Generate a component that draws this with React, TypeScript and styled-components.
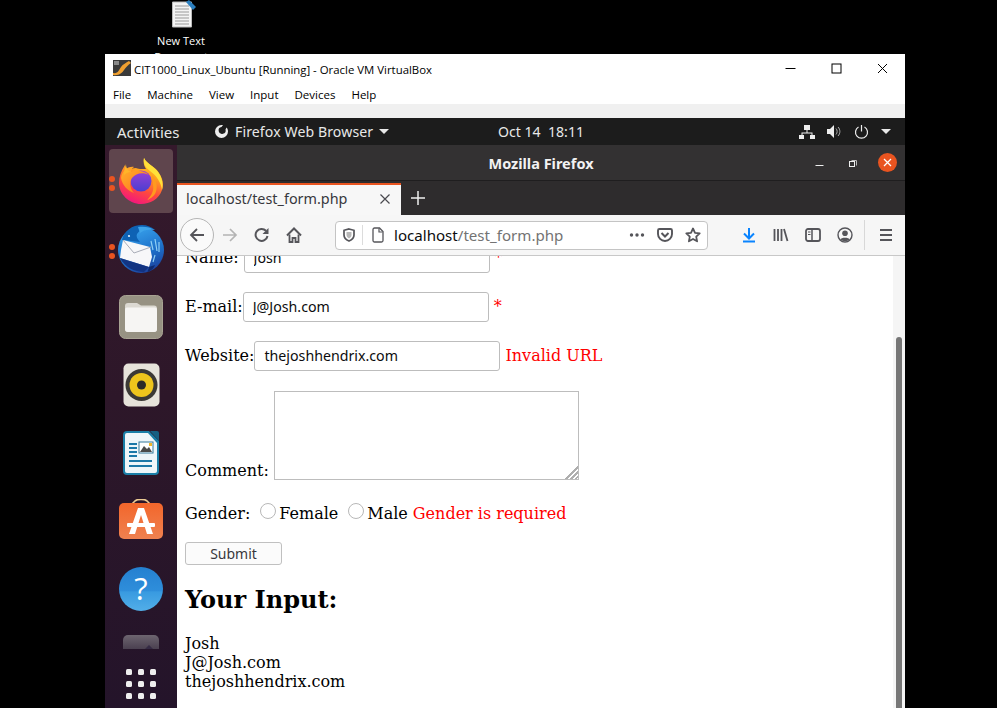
import React from "react";
import styled, { createGlobalStyle } from "styled-components";

const ui = `"Noto Sans", "Open Sans", sans-serif`;
const serif = `"DejaVu Serif", serif`;

const Global = createGlobalStyle`
  html, body { margin: 0; padding: 0; background: #000; overflow: hidden; }
  * { box-sizing: border-box; }
`;

const Screen = styled.div`
  width: 997px; height: 708px; background: #000; overflow: hidden;
  display: flex; flex-direction: column;
`;
const DesktopStrip = styled.div`
  height: 54px; flex: none; overflow: hidden; padding-left: 146px;
`;
const DesktopItem = styled.div`
  width: 70px; display: flex; flex-direction: column; align-items: center;
  color: #fff; font: 11px/16px "Open Sans", sans-serif; text-align: center;
`;
const DesktopIconBox = styled.span` margin-left: 5px; margin-bottom: 5px; `;
const VBox = styled.div`
  margin-left: 105px; width: 800px; flex: 1; min-height: 0; background: #fff;
  display: flex; flex-direction: column;
`;
const VTitle = styled.div`
  height: 28px; flex: none; display: flex; align-items: center; padding-left: 8px;
  font: 11.4px "Open Sans", sans-serif; color: #000;
`;
const VTitleText = styled.span` margin-left: 3px; flex: 1; padding-top: 2px; `;
const WinBtn = styled.span`
  width: 46px; height: 28px; display: flex; align-items: center; justify-content: center;
`;
const VMenu = styled.div`
  height: 22px; flex: none; display: flex; align-items: center; padding: 3px 0 0 8px; gap: 16px;
  font: 11.5px "Open Sans", sans-serif; color: #000;
`;
const VStrip = styled.div` height: 14px; flex: none; background: #f0f0f0; `;
const TopBar = styled.div`
  height: 27px; flex: none; background: #1c1c1c; color: #e8e8e8; display: flex; align-items: center;
  font: 14.1px ${ui}; white-space: nowrap;
`;
const Activities = styled.span` margin-left: 12px; width: 97px; font-size: 15px; `;
const AppMenu = styled.span` display: flex; align-items: center; gap: 6px; width: 175px; letter-spacing: 0.1px; `;
const Clock = styled.span` width: 107px; margin-left: 109px; `;
const Tray = styled.span`
  margin-left: auto; display: flex; align-items: center; gap: 12px; padding-right: 14px;
`;
const Desk = styled.div` flex: 1; min-height: 0; display: flex; `;
const Dock = styled.div`
  width: 72px; flex: none; background: linear-gradient(180deg, #35192c, #2d1729 45%, #24142a);
  display: flex; flex-direction: column; align-items: center; padding-top: 4px; gap: 4px; overflow: hidden;
`;
const DockSlot = styled.div<{ $active?: boolean }>`
  width: 64px; height: 64px; flex: none; border-radius: 4px; position: relative;
  display: flex; align-items: center; justify-content: center;
  background: ${p => (p.$active ? "#5f454d" : "transparent")};
`;
const Pips = styled.span`
  position: absolute; left: 0; top: 27px; display: flex; flex-direction: column; gap: 3px;
`;
const Pip = styled.span` width: 6px; height: 6px; border-radius: 50%; background: #e95420; `;
const PartialIcon = styled.div`
  width: 36px; height: 14px; flex: none; margin-top: 10px; border-radius: 5px 5px 0 0; position: relative;
  background: linear-gradient(180deg, #6d6570, #4a4050);
  &::after {
    content: ""; position: absolute; right: 6px; bottom: 0;
    border: 4px solid transparent; border-top: 0; border-bottom-color: #352a44;
  }
`;
const AppGrid = styled.div`
  margin-top: auto; margin-bottom: 9px; display: grid; grid-template-columns: repeat(3, 6px); gap: 6px;
`;
const GridDot = styled.span` width: 6px; height: 6px; border-radius: 1.5px; background: #eeeeee; `;
const Browser = styled.div` flex: 1; min-width: 0; display: flex; flex-direction: column; `;
const FfTitle = styled.div`
  height: 36px; flex: none; background: #333132; border-bottom: 1px solid #1f1e1f; color: #f2f2f2;
  display: grid; grid-template-columns: 1fr auto 1fr; align-items: center; font: 700 14.5px ${ui};
`;
const FfTitleText = styled.span` grid-column: 2; padding-top: 1px; `;
const FfControls = styled.div`
  grid-column: 3; display: flex; justify-content: flex-end; align-items: center; padding-right: 1px;
`;
const FfBtn = styled.span`
  width: 34px; height: 20px; display: flex; align-items: center; justify-content: center;
`;
const TabBar = styled.div`
  height: 34px; flex: none; background: #2e2c2d; display: flex;
`;
const Tab = styled.div`
  width: 224px; margin-top: 2px; background: #f7f7f7; border-top: 2px solid #e95420; color: #38383d;
  display: flex; align-items: center; padding: 0 11px 3px 9px; justify-content: space-between;
  font: 14.4px ${ui};
`;
const NewTab = styled.span`
  width: 34px; display: flex; align-items: center; justify-content: center;
`;
const Toolbar = styled.div`
  height: 41px; flex: none; background: #f6f6f6; border-bottom: 1px solid #c8c8c8;
  display: flex; align-items: center; padding-left: 3px;
`;
const BackBtn = styled.span`
  width: 34px; height: 34px; border-radius: 50%; border: 1px solid #b5b5b5; background: #fafafa; flex: none;
  display: flex; align-items: center; justify-content: center;
`;
const ToolBtn = styled.span`
  width: 32px; height: 32px; flex: none; display: flex; align-items: center; justify-content: center;
`;
const UrlBtn = styled.span`
  width: 28px; height: 28px; flex: none; display: flex; align-items: center; justify-content: center;
`;
const UrlBox = styled.div`
  width: 373px; height: 29px; flex: none; margin: 0 25px 0 25px; background: #fff; border: 1px solid #c4c4c4;
  border-radius: 4px; display: flex; align-items: center; padding: 0 0 0 5px; font: 15.1px ${ui}; color: #0c0c0d;
`;
const UrlDivider = styled.span` width: 1px; height: 20px; background: #dcdcdc; margin: 0 7px 0 5px; `;
const UrlText = styled.span` flex: 1; margin-left: 8px; `;
const UrlDim = styled.span` color: #737373; `;
const ToolSep = styled.span` width: 1px; height: 30px; background: #d8d8d8; margin: 0 5px 0 3px; flex: none; `;
const Viewport = styled.div` flex: 1; min-height: 0; display: flex; overflow: hidden; background: #fff; `;
const Page = styled.div`
  flex: 1; min-width: 0; padding-left: 8px; font: 16px ${serif}; color: #000;
`;
const ScrolledForm = styled.form` margin-top: -13px; `;
const Row = styled.div<{ $gap?: number }>`
  display: flex; align-items: center; margin-bottom: ${p => p.$gap ?? 19}px; height: 30px;
`;
const RowLabel = styled.span<{ $space?: number }>` margin: 0 ${p => p.$space ?? 0}px 2px 0; `;
const TextInput = styled.input`
  width: 246px; height: 30px; padding: 0 8px 2px 9px; border: 1px solid #bdbdbd; border-radius: 3px;
  font: 14.200px ${ui}; color: #0c0c0d; background: #fff; outline: none;
`;
const Req = styled.span` color: #f00; margin: 0 0 2px 5px; `;
const CommentRow = styled.div`
  display: flex; align-items: flex-end; margin-bottom: 24px;
`;
const CommentLabel = styled.span` line-height: 19px; margin-right: 5px; `;
const Comment = styled.textarea`
  width: 305px; height: 89px; border: 1px solid #bdbdbd; background: #fff; display: block; margin: 0; outline: none;
  &::-webkit-resizer {
    background:
      linear-gradient(135deg, #fff 50%, transparent 50%),
      repeating-linear-gradient(135deg, #fff 0 1.8px, #aeaeae 1.8px 3.4px);
  }
`;
const GenderRow = styled.div`
  display: flex; align-items: center; height: 19px; margin-bottom: 19px;
`;
const GenderNote = styled.span` color: #f00; margin-left: 5px; `;
const Radio = styled.span`
  width: 16px; height: 16px; border-radius: 50%; border: 1px solid #b8b8b8; background: #fff;
  margin: -5px 3px 0 10px; flex: none;
`;
const SubmitBtn = styled.button`
  display: block; width: 97px; height: 23px; padding: 0; border: 1px solid #c0c0c0; border-radius: 3px; background: #fbfbfb;
  font: 14px ${ui}; color: #38383d;
`;
const Heading = styled.h2`
  font: 700 24px/28px ${serif}; margin: 21px 0 20px; color: #000;
`;
const OutputLine = styled.div` line-height: 19px; `;
const ScrollTrack = styled.div`
  width: 12px; flex: none; background: #f5f5f5; padding-top: 81px; display: flex; justify-content: center;
`;
const ScrollThumb = styled.div` width: 6px; flex: none; background: #777; border-radius: 3px 3px 0 0; `;

const Svg: React.FC<{ w: number; h?: number; children: React.ReactNode }> = ({ w, h, children }) => (
  <svg width={w} height={h ?? w} viewBox={`0 0 ${w} ${h ?? w}`} fill="none" style={{ display: "block", flex: "none" }}>
    {children}
  </svg>
);

const FirefoxLogo = () => (
  <Svg w={44} h={46}>
    <defs>
      <linearGradient id="ffa" x1="0.75" y1="0" x2="0.35" y2="1">
        <stop offset="0" stopColor="#ffd52a" /><stop offset="0.35" stopColor="#ffa11f" />
        <stop offset="0.68" stopColor="#ff4a3d" /><stop offset="1" stopColor="#f2157f" />
      </linearGradient>
      <linearGradient id="ffb" x1="0.5" y1="0" x2="0.5" y2="1">
        <stop offset="0" stopColor="#9b3fd6" /><stop offset="1" stopColor="#4a3fd0" />
      </linearGradient>
      <linearGradient id="ffc" x1="0" y1="0" x2="1" y2="1">
        <stop offset="0" stopColor="#ffb52a" /><stop offset="1" stopColor="#ff6a1f" />
      </linearGradient>
    </defs>
    <path d="M25 0C27 6 36 8 40 15 44 21 45 27 43 32 40 41 31 46 22 46 10 46 0 36 0 25 0 19 2 13 6 7c0 3 1 5 2 7 2-3 6-4 9-4 1 1 6 1 10 1-2-3-3-7-2-11z" fill="url(#ffa)" />
    <path d="M25 0c3 6 12 9 16 17 3 6 3 12 2 15-1-7-5-14-12-19-4-3-7-7-6-13z" fill="#ffe13a" />
    <path d="M33 17c5 5 6 13 3 19-2 3-5 5-8 6 5-5 7-10 6-15-.1-4-.5-7-1-10z" fill="#ff9a1f" />
    <circle cx="22" cy="23" r="10.500" fill="url(#ffb)" />
    <path d="M2 20c1-7 7-12 13-11-2 1-3 3-3 5 4-2 13-2 18 3-6-3-13-2-17 3-3 4-2 11 2 15-6-2-12-8-13-15z" fill="url(#ffc)" />
    <path d="M7 6c0 4 2 7 5 8-3 0-5 1-7 3 0-4 1-8 2-11z" fill="#ffb52a" />
  </Svg>
);
const Thunderbird = () => (
  <Svg w={48}>
    <defs>
      <linearGradient id="tb" x1="0.3" y1="0" x2="0.7" y2="1">
        <stop offset="0" stopColor="#39a5ee" /><stop offset="0.6" stopColor="#1d6fc8" /><stop offset="1" stopColor="#1c3f9c" />
      </linearGradient>
    </defs>
    <circle cx="24" cy="25" r="23" fill="url(#tb)" />
    <path d="M5 15C7 6 15 0 25 0c5 0 10 2 13 5-8-2-15-1-18 4-1 2 0 5 3 8L6 15z" fill="#0e62b4" />
    <path d="M21 2c6-1 12 0 17 3-7-1-12 0-15 3z" fill="#3fa4ea" />
    <path d="M34 16l2 9M38 14l2 12M42 17l0 10M30 40l3-8M36 37l2-7" stroke="#8fd0f5" strokeWidth="1.200" />
    <path d="M6 15l27 7 2 10-3 10L3 33l1-8z" fill="#f7f7f9" />
    <path d="M6 15l11 13 17-6" stroke="#a9adb8" strokeWidth="1" />
    <path d="M3 33l29 9-5 5c-10 0-19-5-24-14z" fill="#12307c" opacity="0.900" />
    <path d="M32 42l6-2c-1 3-3 5-7 7-1-1 1-3 1-5z" fill="#0f2a6e" />
    <circle cx="12" cy="11" r="1.100" fill="#dff1ff" />
  </Svg>
);
const FilesIcon = () => (
  <Svg w={44}>
    <rect x="0.500" y="0.500" width="43" height="43" rx="6" fill="#979283" stroke="#a8a393" />
    <path d="M6 11a3 3 0 0 1 3-3h9l4 2.500h13a3 3 0 0 1 3 3V34a3 3 0 0 1-3 3H9a3 3 0 0 1-3-3z" fill="#dcd9d2" />
    <path d="M6 14.500a2 2 0 0 1 2-2h28a2 2 0 0 1 2 2V34a3 3 0 0 1-3 3H9a3 3 0 0 1-3-3z" fill="#f6f5f3" />
  </Svg>
);
const Rhythmbox = () => (
  <Svg w={37} h={44}>
    <rect x="0.500" y="0.500" width="36" height="43" rx="5" fill="#e6e3da" />
    <circle cx="18.500" cy="22" r="16" fill="#3b3935" />
    <circle cx="18.500" cy="22" r="12" fill="#eec51c" />
    <circle cx="18.500" cy="22" r="4.500" fill="#2b2a28" />
  </Svg>
);
const Writer = () => (
  <Svg w={36} h={44}>
    <path d="M4 0h22l10 10v30a4 4 0 0 1-4 4H4a4 4 0 0 1-4-4V4a4 4 0 0 1 4-4z" fill="#1a7fa8" />
    <path d="M27 0h7a2 2 0 0 1 2 2v8z" fill="#165f82" />
    <path d="M4 2h21l9 10v28a2 2 0 0 1-2 2H4a2 2 0 0 1-2-2V4a2 2 0 0 1 2-2z" fill="#eef6fa" />
    <path d="M6 13h8M6 17h8M6 21h8M6 25h8M6 30h23M6 35h23" stroke="#1b78a8" strokeWidth="2" />
    <rect x="16" y="11" width="14" height="11" fill="#fff" stroke="#34789a" />
    <path d="M17 21l4-6 3 3 2-2 3 5z" fill="#4a4a4a" />
    <rect x="26" y="12" width="3" height="3" fill="#f0b72a" />
  </Svg>
);
const SoftwareIcon = () => (
  <Svg w={44} h={44}>
    <defs>
      <linearGradient id="sw" x1="0" y1="0" x2="0" y2="1">
        <stop offset="0" stopColor="#f2662b" /><stop offset="1" stopColor="#ef8150" />
      </linearGradient>
    </defs>
    <path d="M13 7c1-9 17-9 18 0" stroke="#eccb94" strokeWidth="1.800" />
    <rect x="0" y="4" width="44" height="36" rx="5" fill="url(#sw)" />
    <path d="M19 9h6l9 26h-6l-6-19-6 19h-6z" fill="#fff" />
    <rect x="8" y="24" width="28" height="4" rx="1" fill="#fff" />
  </Svg>
);
const HelpIcon = () => (
  <Svg w={44}>
    <defs>
      <linearGradient id="hp" x1="0" y1="0" x2="0" y2="1">
        <stop offset="0" stopColor="#2480d0" /><stop offset="0.55" stopColor="#2f8edb" />
        <stop offset="0.56" stopColor="#389ae0" /><stop offset="1" stopColor="#52aee8" />
      </linearGradient>
    </defs>
    <circle cx="22" cy="22" r="22" fill="url(#hp)" />
    <text x="22" y="33" textAnchor="middle" fill="#fff" style={{ font: `400 31px "Open Sans", sans-serif` }}>?</text>
  </Svg>
);
const DocIcon = () => (
  <Svg w={26} h={28}>
    <path d="M1.500 2h19v25h-19z" fill="#f4f4f4" stroke="#bbb" />
    <path d="M4 6h14M4 9h14M4 12h14M4 15h14M4 18h14M4 21h14M4 24h14" stroke="#9a9a9a" />
    <path d="M15 2l3-2 7 7-3 3z" fill="#2b7fc0" />
  </Svg>
);
const VBoxLogo = () => (
  <Svg w={18} h={16}>
    <rect width="18" height="16" fill="#3a3a3a" />
    <path d="M0 13c5 1 6-3 8-6s5-4 8-6l2 2c-3 2-5 4-7 7s-5 6-11 5z" fill="#f0a030" />
    <rect x="1" y="1" width="5" height="4" fill="#8a8a8a" />
  </Svg>
);

const Gray = "#55555a";

export default function App() {
  return (
    <Screen>
      <Global />
      <DesktopStrip>
        <DesktopItem>
          <DesktopIconBox><DocIcon /></DesktopIconBox>
          <span>New Text Document</span>
        </DesktopItem>
      </DesktopStrip>
      <VBox>
        <VTitle>
          <VBoxLogo />
          <VTitleText>CIT1000_Linux_Ubuntu [Running] - Oracle VM VirtualBox</VTitleText>
          <WinBtn><Svg w={11}><path d="M0.500 5.500h10" stroke="#000" /></Svg></WinBtn>
          <WinBtn><Svg w={11}><rect x="1" y="1" width="9" height="9" stroke="#000" /></Svg></WinBtn>
          <WinBtn><Svg w={11}><path d="M1 1l9 9M10 1l-9 9" stroke="#000" /></Svg></WinBtn>
        </VTitle>
        <VMenu>
          <span>File</span><span>Machine</span><span>View</span><span>Input</span><span>Devices</span><span>Help</span>
        </VMenu>
        <VStrip />
        <TopBar>
          <Activities>Activities</Activities>
          <AppMenu>
            <Svg w={15}>
              <path d="M7.500 1a6.500 6.500 0 1 0 6.500 6.500c0-1.500-.5-3-1.500-4l-1 2a3.500 3.500 0 1 1-4-2.500l1.500-2z" fill="#eee" />
            </Svg>
            Firefox Web Browser
            <Svg w={10} h={6}><path d="M0 0h10L5 5z" fill="#e8e8e8" /></Svg>
          </AppMenu>
          <Clock>Oct 14&nbsp; 18:11</Clock>
          <Tray>
            <Svg w={16}>
              <path d="M5 1h6v5H5zM0 11h5v4H0zM11 11h5v4h-5zM7.500 6h1v2.500h5V11h-1V9.500h-9V11h-1V8.500h5z" fill="#eee" />
            </Svg>
            <Svg w={15}>
              <path d="M0 5h3l4-4v13l-4-4H0z" fill="#eee" />
              <path d="M9 4.500c1.500 1.500 1.500 4.500 0 6M11 3c2.500 2.500 2.500 6.500 0 9" stroke="#aaa" />
            </Svg>
            <Svg w={15}>
              <path d="M7.500 1v6.500" stroke="#eee" strokeWidth="1.200" />
              <path d="M4.500 3a6 6 0 1 0 6 0" stroke="#eee" strokeWidth="1.200" />
            </Svg>
            <Svg w={10} h={6}><path d="M0 0h10L5 5z" fill="#e8e8e8" /></Svg>
          </Tray>
        </TopBar>
        <Desk>
          <Dock>
            <DockSlot $active><Pips><Pip /><Pip /></Pips><FirefoxLogo /></DockSlot>
            <DockSlot><Pips><Pip /><Pip /></Pips><Thunderbird /></DockSlot>
            <DockSlot><FilesIcon /></DockSlot>
            <DockSlot><Rhythmbox /></DockSlot>
            <DockSlot><Writer /></DockSlot>
            <DockSlot><SoftwareIcon /></DockSlot>
            <DockSlot><HelpIcon /></DockSlot>
            <PartialIcon />
            <AppGrid>
              {Array.from({ length: 9 }, (_, i) => <GridDot key={i} />)}
            </AppGrid>
          </Dock>
          <Browser>
            <FfTitle>
              <FfTitleText>Mozilla Firefox</FfTitleText>
              <FfControls>
                <FfBtn><Svg w={9}><path d="M0.500 7.500h8" stroke="#eee" /></Svg></FfBtn>
                <FfBtn>
                  <Svg w={8}>
                    <path d="M2.500 1.500h5v5" stroke="#bbb" />
                    <rect x="0.500" y="2.500" width="5" height="5" stroke="#eee" />
                  </Svg>
                </FfBtn>
                <FfBtn>
                  <Svg w={19}>
                    <circle cx="9.500" cy="9.500" r="9.500" fill="#e95420" />
                    <path d="M6 6l7 7M13 6l-7 7" stroke="#fff" strokeWidth="1.300" />
                  </Svg>
                </FfBtn>
              </FfControls>
            </FfTitle>
            <TabBar>
              <Tab>
                localhost/test_form.php
                <Svg w={10}><path d="M0.500 0.500l9 9M9.500 0.500l-9 9" stroke="#4a4a4f" strokeWidth="1.200" /></Svg>
              </Tab>
              <NewTab><Svg w={14}><path d="M7 0v14M0 7h14" stroke="#eee" strokeWidth="1.500" /></Svg></NewTab>
            </TabBar>
            <Toolbar>
              <BackBtn>
                <Svg w={16}><path d="M15 8H2M8 2L2 8l6 6" stroke={Gray} strokeWidth="1.800" /></Svg>
              </BackBtn>
              <ToolBtn>
                <Svg w={16}><path d="M1 8h13M8 2l6 6-6 6" stroke="#b4b4b4" strokeWidth="1.700" /></Svg>
              </ToolBtn>
              <ToolBtn>
                <Svg w={16}>
                  <path d="M13.500 9a6 6 0 1 1-1.500-5.200" stroke={Gray} strokeWidth="2" />
                  <path d="M14.500 1v6h-6z" fill={Gray} />
                </Svg>
              </ToolBtn>
              <ToolBtn>
                <Svg w={16}>
                  <path d="M1 8.500l7-7 7 7" stroke={Gray} strokeWidth="2" />
                  <path d="M3.500 7.500V15h3v-4h3v4h3V7.500" stroke={Gray} strokeWidth="1.800" />
                </Svg>
              </ToolBtn>
              <UrlBox>
                <Svg w={16}>
                  <path d="M8 2l5 1.300V8c0 3-2.500 5-5 6-2.500-1-5-3-5-6V3.300z" stroke={Gray} strokeWidth="1.700" />
                  <path d="M5.500 5h5v3c0 1.500-1 2.800-2.500 3.500-1.500-.7-2.500-2-2.500-3.500z" fill="#b8b8b8" />
                </Svg>
                <UrlDivider />
                <Svg w={16}>
                  <path d="M3 2.500a1.500 1.500 0 0 1 1.500-1.500H9.500L13 4.500v9a1.500 1.500 0 0 1-1.500 1.500h-7A1.500 1.500 0 0 1 3 13.500z" stroke={Gray} strokeWidth="1.300" />
                  <path d="M9 1.500V5h3.500" stroke={Gray} strokeWidth="1.200" />
                </Svg>
                <UrlText>localhost<UrlDim>/test_form.php</UrlDim></UrlText>
                <UrlBtn>
                  <Svg w={16}>
                    <circle cx="2.500" cy="8" r="1.700" fill={Gray} />
                    <circle cx="8" cy="8" r="1.700" fill={Gray} />
                    <circle cx="13.500" cy="8" r="1.700" fill={Gray} />
                  </Svg>
                </UrlBtn>
                <UrlBtn>
                  <Svg w={16}>
                    <path d="M1 3.500A1.500 1.500 0 0 1 2.500 2h11A1.500 1.500 0 0 1 15 3.500V7a7 7 0 0 1-14 0z" stroke={Gray} strokeWidth="1.900" />
                    <path d="M4.500 6L8 9.500 11.500 6" stroke={Gray} strokeWidth="2" />
                  </Svg>
                </UrlBtn>
                <UrlBtn>
                  <Svg w={16}>
                    <path d="M8 1.500l2 4.300 4.700.6-3.500 3.200.9 4.700L8 12l-4.100 2.300.9-4.700L1.300 6.400 6 5.800z" stroke={Gray} strokeWidth="1.800" strokeLinejoin="round" />
                  </Svg>
                </UrlBtn>
              </UrlBox>
              <ToolBtn>
                <Svg w={16}>
                  <path d="M8 1v10M3 6.500L8 11.500l5-5" stroke="#0a84ff" strokeWidth="2" />
                  <path d="M2 14.500h12" stroke="#0a84ff" strokeWidth="2" />
                </Svg>
              </ToolBtn>
              <ToolBtn>
                <Svg w={16}><path d="M1.500 2v12M5 2v12M8.500 2v12M11 2l3.500 12" stroke={Gray} strokeWidth="1.800" /></Svg>
              </ToolBtn>
              <ToolBtn>
                <Svg w={16}>
                  <rect x="1" y="2" width="14" height="12" rx="2" stroke={Gray} strokeWidth="1.800" />
                  <path d="M7 2v12" stroke={Gray} strokeWidth="1.500" />
                  <path d="M3 5h2.500M3 7.500h2.500" stroke={Gray} />
                </Svg>
              </ToolBtn>
              <ToolBtn>
                <Svg w={16}>
                  <circle cx="8" cy="8" r="7" stroke={Gray} strokeWidth="1.400" />
                  <circle cx="8" cy="6.200" r="2.800" fill={Gray} />
                  <path d="M3.200 12.500c1-2.500 8.600-2.500 9.600 0-2.500 2-7 2-9.600 0z" fill={Gray} />
                </Svg>
              </ToolBtn>
              <ToolSep />
              <ToolBtn>
                <Svg w={14}><path d="M1 2h12M1 7h12M1 12h12" stroke={Gray} strokeWidth="2" /></Svg>
              </ToolBtn>
            </Toolbar>
            <Viewport>
              <Page>
                <ScrolledForm onSubmit={e => e.preventDefault()}>
                  <Row>
                    <RowLabel $space={5}>Name:</RowLabel>
                    <TextInput defaultValue="Josh" />
                    <Req>*</Req>
                  </Row>
                  <Row>
                    <RowLabel>E-mail:</RowLabel>
                    <TextInput defaultValue="J@Josh.com" />
                    <Req>*</Req>
                  </Row>
                  <Row $gap={20}>
                    <RowLabel>Website:</RowLabel>
                    <TextInput defaultValue="thejoshhendrix.com" />
                    <Req>Invalid URL</Req>
                  </Row>
                  <CommentRow>
                    <CommentLabel>Comment:</CommentLabel>
                    <Comment />
                  </CommentRow>
                  <GenderRow>
                    Gender:
                    <Radio />Female
                    <Radio />Male
                    <GenderNote>Gender is required</GenderNote>
                  </GenderRow>
                  <SubmitBtn type="submit">Submit</SubmitBtn>
                </ScrolledForm>
                <Heading>Your Input:</Heading>
                <OutputLine>Josh</OutputLine>
                <OutputLine>J@Josh.com</OutputLine>
                <OutputLine>thejoshhendrix.com</OutputLine>
              </Page>
              <ScrollTrack><ScrollThumb /></ScrollTrack>
            </Viewport>
          </Browser>
        </Desk>
      </VBox>
    </Screen>
  );
}
